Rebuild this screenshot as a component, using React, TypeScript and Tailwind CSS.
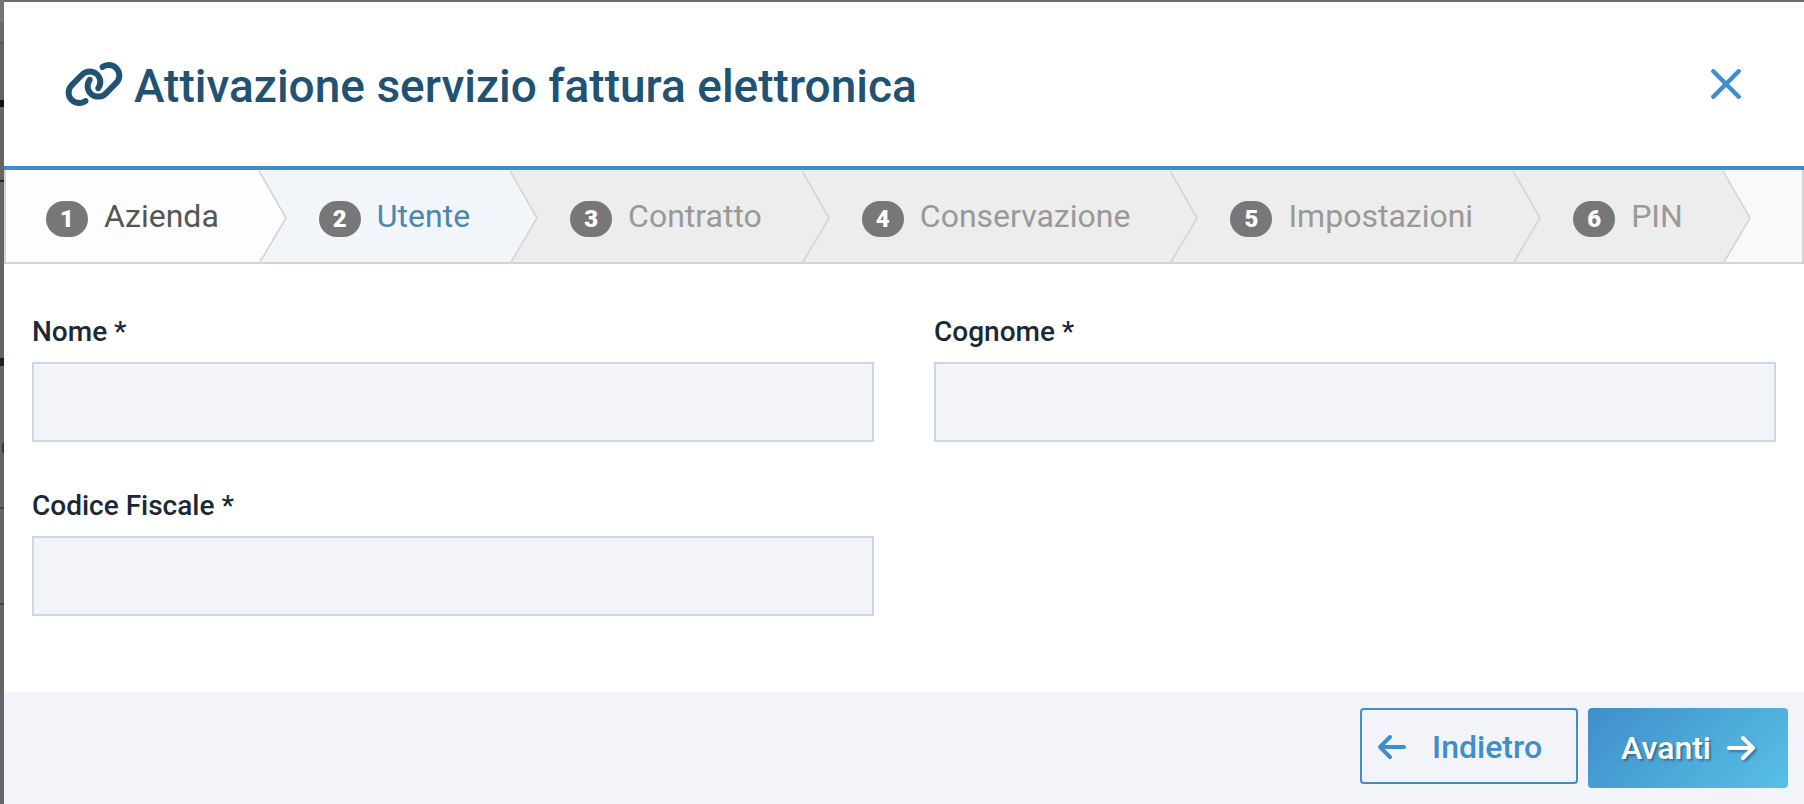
import { FaArrowLeft, FaArrowRight, FaLink } from "react-icons/fa6";

type Step = {
  label: string;
  className: string;
  arrowClassName: string;
};

const steps: Step[] = [
  { label: "Azienda", className: "bg-[#fdfdfd] pl-10 text-[#555555]", arrowClassName: "bg-[#f2f5fa] fill-[#fdfdfd]" },
  { label: "Utente", className: "bg-[#f2f5fa] pl-8 text-[#4e87ac]", arrowClassName: "bg-[#ededed] fill-[#f2f5fa]" },
  { label: "Contratto", className: "bg-[#ededed] pl-8 text-[#999999]", arrowClassName: "bg-[#ededed] fill-[#ededed]" },
  { label: "Conservazione", className: "bg-[#ededed] pl-8 text-[#999999]", arrowClassName: "bg-[#ededed] fill-[#ededed]" },
  { label: "Impostazioni", className: "bg-[#ededed] pl-8 text-[#999999]", arrowClassName: "bg-[#ededed] fill-[#ededed]" },
  { label: "PIN", className: "bg-[#ededed] pl-8 text-[#999999]", arrowClassName: "bg-[#f9f9f9] fill-[#ededed]" },
];

function PageEdge() {
  return (
    <div className="flex w-1 shrink-0 flex-col overflow-hidden bg-[#666462]" aria-hidden="true">
      <div className="h-[22px] bg-[#777574]" />
      <div className="h-[22px] border-b-2 border-[#5a5857] bg-[#6a6867]" />
      <div className="mt-14 h-[7px] bg-[#111111]" />
      <div className="mt-[73px] h-0.5 bg-[#14273a]" />
      <div className="mt-44 h-2 bg-[#12232f]" />
      <div className="mt-[76px] ml-0.5 h-3 w-2 rounded-full bg-[#333231]" />
      <div className="mt-[53px] h-0.5 bg-[#484645]" />
      <div className="mt-[94px] h-0.5 bg-[#484645]" />
    </div>
  );
}

function WizardStep({ step, number }: { step: Step; number: number }) {
  return (
    <li className="flex" aria-current={number === 2 ? "step" : undefined}>
      <div className={`flex items-center gap-4 pr-10 ${step.className}`}>
        <span className="mt-1.5 flex h-9 w-[42px] items-center justify-center rounded-[18px] bg-[#777777] text-2xl font-black text-white">
          {number}
        </span>
        <span className="text-[32px] leading-10">{step.label}</span>
      </div>
      <svg className={`h-[92px] w-7 ${step.arrowClassName}`} viewBox="0 0 28 92" aria-hidden="true">
        <path d="M0 0V92H1L27 48L0 1Z" stroke="none" />
        <path d="M0 1L27 48L1 92" fill="none" stroke="#d4d4d4" strokeWidth="1.6" />
      </svg>
    </li>
  );
}

function Field({ id, label }: { id: string; label: string }) {
  return (
    <div className="flex flex-col gap-2.5">
      <label htmlFor={id} className="text-[28px] leading-10 font-medium text-[#1a2935]">
        {label} *
      </label>
      <input id={id} type="text" required className="h-20 w-full border-2 border-[#cbd8e7] bg-[#f3f4f9] px-5 text-[28px] outline-none" />
    </div>
  );
}

export default function App() {
  return (
    <div className="flex min-h-screen bg-[#6e6b6b] font-[Roboto,sans-serif]">
      <PageEdge />
      <div role="dialog" aria-labelledby="dialog-title" className="mt-0.5 flex flex-1 flex-col bg-white">
        <header className="flex h-[168px] items-center justify-between border-b-4 border-[#3f8ecb] pr-[63px] pl-15">
          <div className="flex items-center gap-2.5 text-[#215173]">
            <FaLink className="h-12 w-[60px]" aria-hidden="true" />
            <h1 id="dialog-title" className="pt-1 text-[46px] leading-14 font-medium">
              Attivazione servizio fattura elettronica
            </h1>
          </div>
          <button type="button" aria-label="Chiudi" className="text-[#3f8ecb]">
            <svg className="size-[30px]" viewBox="0 0 30 30" fill="none" stroke="currentColor" strokeWidth="4.4" strokeLinecap="round">
              <path d="M2.3 2.3L27.7 27.7M27.7 2.3L2.3 27.7" />
            </svg>
          </button>
        </header>

        <ol className="flex overflow-hidden border-x-2 border-b-2 border-[#d4d4d4] bg-[#f9f9f9]">
          {steps.map((step, index) => (
            <WizardStep key={step.label} step={step} number={index + 1} />
          ))}
        </ol>

        <form className="flex flex-1 flex-col">
          <div className="grid flex-1 grid-cols-2 content-start gap-x-15 gap-y-11 px-7 pt-12 pb-19">
            <Field id="nome" label="Nome" />
            <Field id="cognome" label="Cognome" />
            <Field id="codice-fiscale" label="Codice Fiscale" />
          </div>
          <footer className="flex items-start justify-end gap-2.5 bg-[#f3f4f9] p-4 text-[32px] font-medium">
            <button type="button" className="flex h-19 items-center gap-[26px] rounded border-2 border-[#3f8ecb] pt-0.5 pr-[34px] pl-4 text-[#3f8ecb]">
              <FaArrowLeft className="h-8 w-7" aria-hidden="true" />
              Indietro
            </button>
            <button
              type="submit"
              className="flex h-20 items-center gap-4 rounded bg-linear-135 from-[#3f8ecb] to-[#58c0e6] px-[33px] text-white text-shadow-[2px_2px_2px_rgba(0,0,0,0.3)]"
            >
              Avanti
              <FaArrowRight className="h-8 w-7 drop-shadow-[2px_2px_1px_rgba(0,0,0,0.3)]" aria-hidden="true" />
            </button>
          </footer>
        </form>
      </div>
    </div>
  );
}
